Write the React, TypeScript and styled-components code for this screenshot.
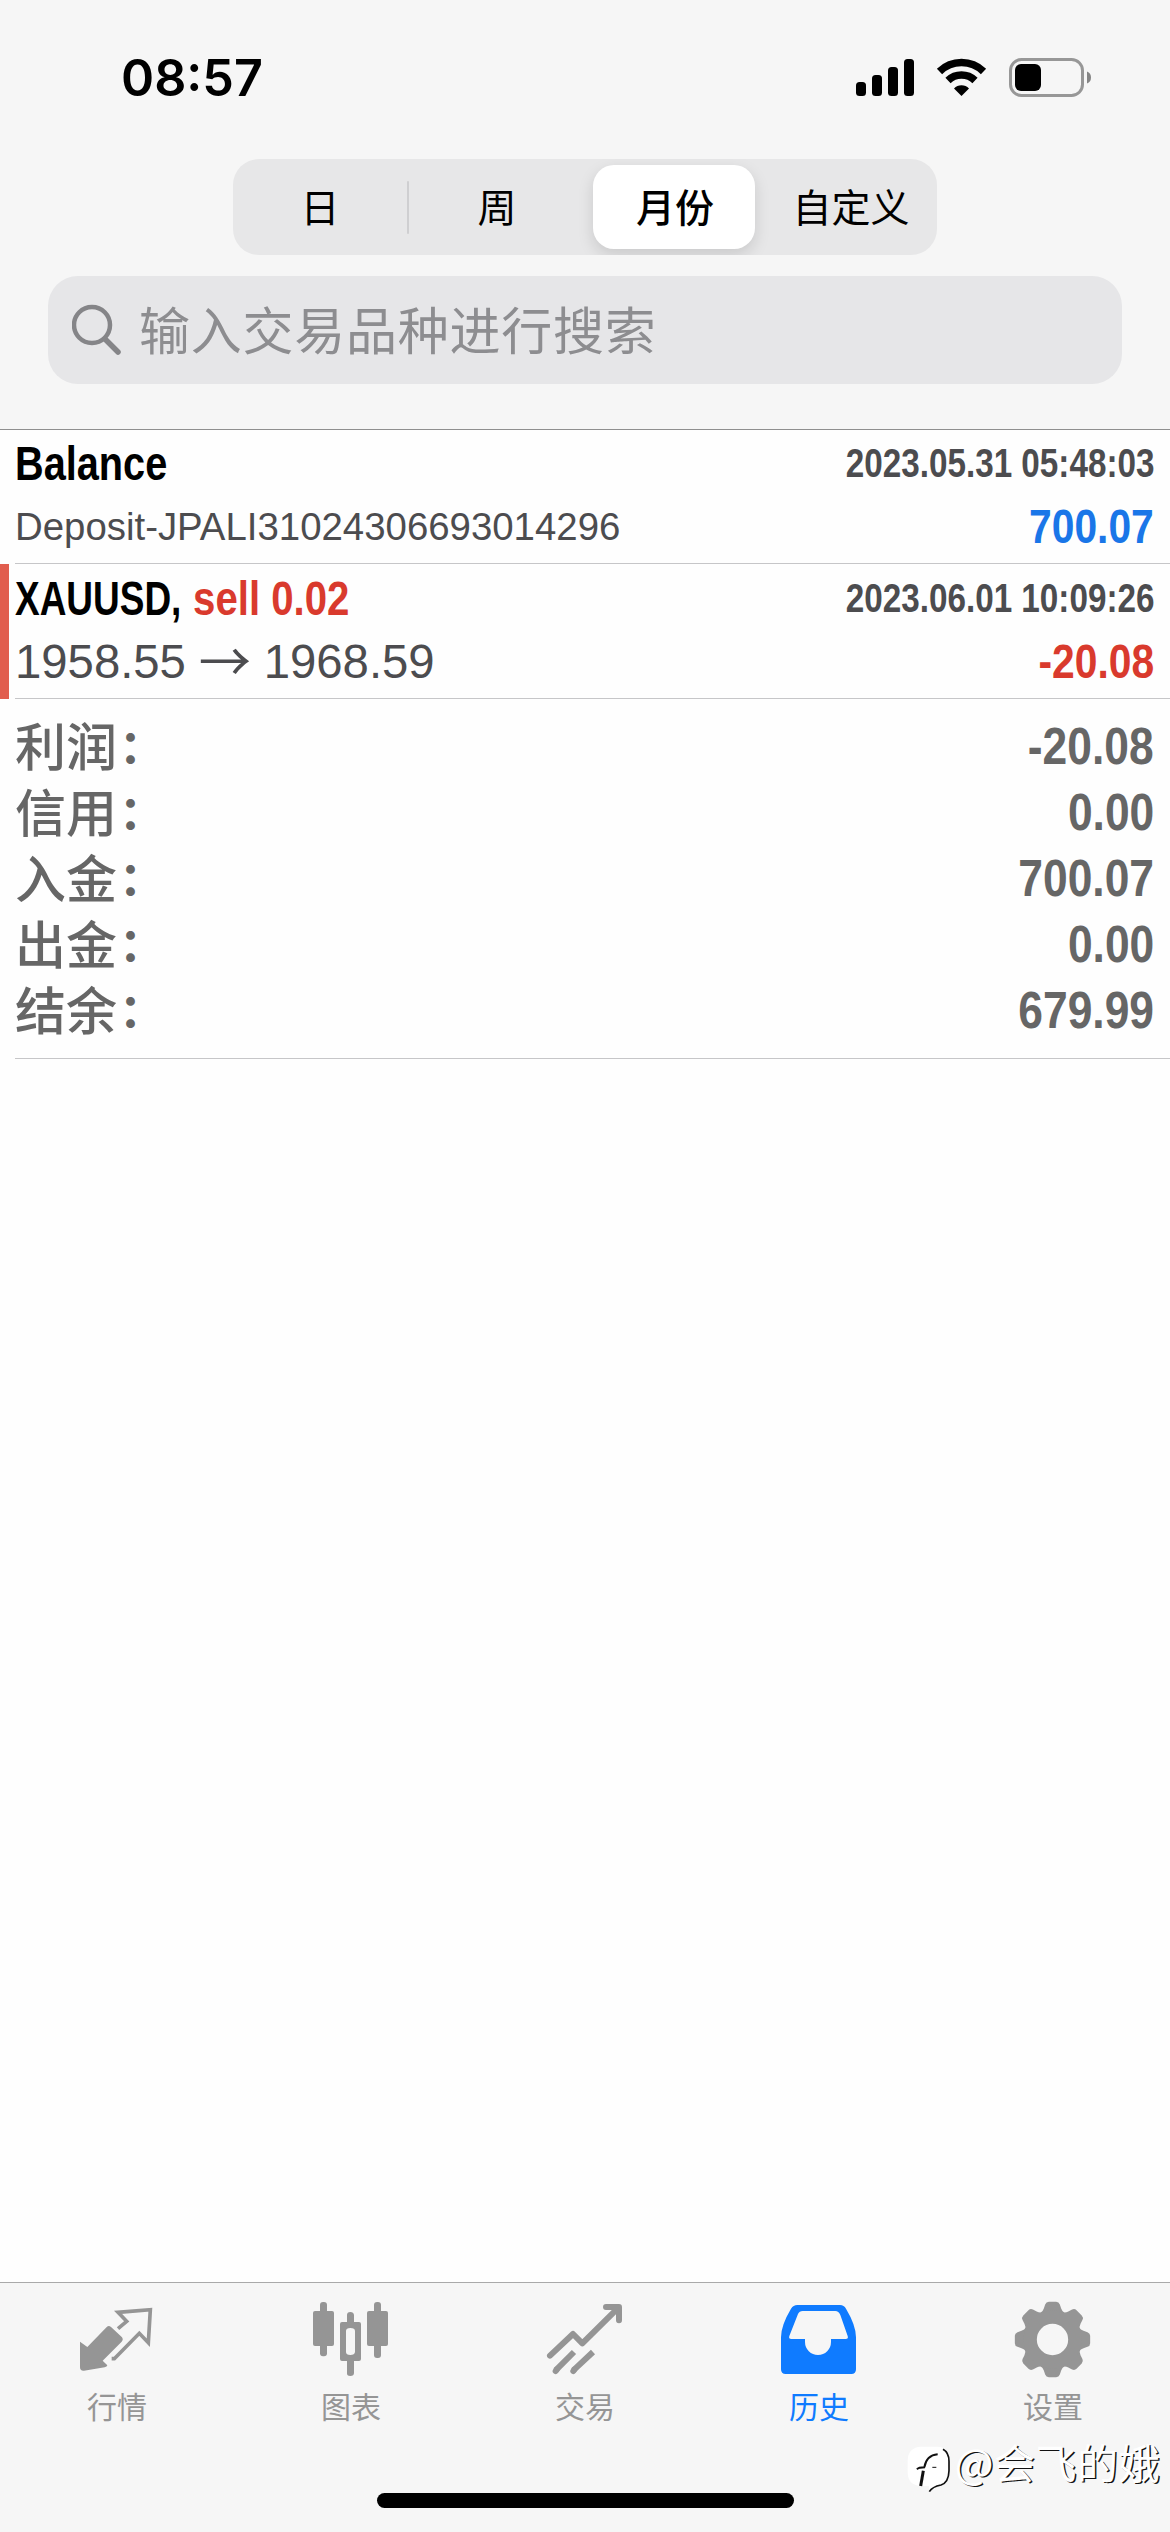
import React from "react";
import styled, { createGlobalStyle } from "styled-components";

const LATIN = `"Liberation Sans", Arial, "Noto Sans CJK SC", sans-serif`;
const CJK = `"Noto Sans CJK SC", "Liberation Sans", sans-serif`;

const GlobalStyle = createGlobalStyle`
  * { box-sizing: border-box; }
  html, body { margin: 0; padding: 0; background: #fff; }
`;

const Screen = styled.div`
  position: relative;
  width: 1170px;
  height: 2532px;
  display: flex;
  flex-direction: column;
  background: #fefefe;
  overflow: hidden;
  font-family: ${LATIN};
`;

const Header = styled.header`
  flex: none;
  height: 430px;
  background: #f6f6f6;
  border-bottom: 1px solid #8f8f8f;
  display: flex;
  flex-direction: column;
  align-items: center;
`;

const StatusBar = styled.div`
  width: 100%;
  height: 159px;
  padding: 0 78px 0 121px;
  display: flex;
  justify-content: space-between;
`;

const Clock = styled.div`
  margin-top: 47px;
  font: 600 51px/62px Inter, sans-serif;
  color: #000;
  transform-origin: left;
  transform: scaleX(0.985);
`;

const StatusIcons = styled.div`
  display: flex;
  padding-top: 56px;
`;

const Segmented = styled.div`
  width: 704px;
  height: 96px;
  border-radius: 26px;
  background: #e7e7e8;
  display: flex;
  align-items: center;
  overflow: hidden;
`;

const Segment = styled.div<{ $active?: boolean; $width: number; $inset?: number }>`
  flex: none;
  width: ${(p) => p.$width}px;
  height: 84px;
  padding-left: ${(p) => p.$inset ?? 0}px;
  border-radius: 21px;
  font: ${(p) => (p.$active ? 500 : 400)} 39px/80px ${CJK};
  text-align: center;
  color: #000;
  background: ${(p) => (p.$active ? "#fff" : "transparent")};
  box-shadow: ${(p) => (p.$active ? "0 6px 16px rgba(0,0,0,.13)" : "none")};
  margin-left: ${(p) => (p.$active ? 10 : 0)}px;
`;

const SegmentRule = styled.div`
  width: 2px;
  height: 53px;
  border-radius: 1px;
  background: #cfcfd1;
`;

const SearchField = styled.div`
  width: 1074px;
  height: 108px;
  margin-top: 21px;
  padding-left: 24px;
  border-radius: 30px;
  background: #e6e6e8;
  display: flex;
  align-items: center;
  gap: 15px;
`;

const Placeholder = styled.span`
  font: 400 51px/100px ${CJK};
  letter-spacing: 0.75px;
  color: #8d8d90;
  padding-bottom: 4px;
`;

const Entry = styled.article<{ $height: number; $marked?: boolean }>`
  flex: none;
  height: ${(p) => p.$height}px;
  display: grid;
  grid-template-columns: 9px 1fr;
  column-gap: 6px;

  &::before {
    content: "";
    background: ${(p) => (p.$marked ? "#e15d4e" : "transparent")};
  }
`;

const EntryBody = styled.div`
  display: flex;
  flex-direction: column;
  justify-content: flex-end;
  padding: 0 16px 4px 0;
  border-bottom: 1px solid #c6c6c8;
`;

const Line = styled.div`
  height: 64px;
  display: flex;
  justify-content: space-between;
  align-items: center;
  white-space: nowrap;
`;

const Label = styled.span<{
  $size: number;
  $color: string;
  $bold?: boolean;
  $narrow?: number;
  $end?: boolean;
}>`
  font-size: ${(p) => p.$size}px;
  line-height: 64px;
  font-weight: ${(p) => (p.$bold ? 700 : 400)};
  color: ${(p) => p.$color};
  transform-origin: ${(p) => (p.$end ? "right" : "left")};
  transform: scaleX(${(p) => p.$narrow ?? 1});
`;

const SymbolName = styled.span`
  display: inline-block;
  transform-origin: left;
  transform: scaleX(0.92);
  margin-right: -17px;
`;

const Side = styled.span`
  color: #d93a2d;
`;

const Arrow = styled.span`
  font-family: "Noto Sans CJK SC", sans-serif;
  font-size: 53px;
  line-height: 0;
  vertical-align: -4px;
  margin: 0 13px;
`;

const Summary = styled.section`
  flex: none;
  margin-left: 15px;
  height: 360px;
  padding: 15px 16px 0 0;
  border-bottom: 1px solid #c6c6c8;
`;

const SummaryLine = styled.div`
  height: 66px;
  display: flex;
  justify-content: space-between;
  align-items: center;
`;

const SummaryName = styled.span`
  font: 500 51px/60px ${CJK};
  color: #666;
  padding-bottom: 7px;
`;

const Colon = styled.span`
  margin-left: 2px;
  font-size: 46px;
  font-weight: 700;
  line-height: 0;
  vertical-align: 3px;
`;

const Spacer = styled.div`
  flex: 1;
`;

const TabBar = styled.nav`
  flex: none;
  height: 250px;
  padding-top: 15px;
  border-top: 1px solid #a9a9a9;
  background: #f6f6f6;
  display: flex;
  flex-direction: column;
  justify-content: space-between;
`;

const Tabs = styled.div`
  display: grid;
  grid-template-columns: repeat(5, 1fr);
`;

const Tab = styled.div<{ $active?: boolean }>`
  display: flex;
  flex-direction: column;
  align-items: center;
  color: ${(p) => (p.$active ? "#0f7bff" : "#959595")};
`;

const TabName = styled.span`
  font: 400 30px/40px ${CJK};
  margin-top: 7px;
`;

const HomeIndicator = styled.div`
  width: 417px;
  height: 15px;
  border-radius: 8px;
  background: #000;
  margin: 0 auto 24px;
`;

const Watermark = styled.div`
  position: absolute;
  right: 10px;
  bottom: 38px;
  display: flex;
  align-items: flex-end;
  gap: 4px;
  color: #fff;
`;

const WatermarkName = styled.span`
  font: 400 41px/52px ${CJK};
  letter-spacing: 0.5px;
  padding-bottom: 7px;
  text-shadow: 1.5px 1px 0 #111;
`;

const entries = [
  {
    height: 134,
    title: "Balance",
    side: "",
    time: "2023.05.31 05:48:03",
    amount: "700.07",
    color: "#1a76e8",
  },
  {
    height: 135,
    title: "XAUUSD,",
    side: "sell 0.02",
    time: "2023.06.01 10:09:26",
    amount: "-20.08",
    color: "#d93a2d",
  },
];

const totals = [
  ["利润", "-20.08"],
  ["信用", "0.00"],
  ["入金", "700.07"],
  ["出金", "0.00"],
  ["结余", "679.99"],
];

const QuotesIcon = () => (
  <svg width="80" height="80" viewBox="231 114 240 240">
    <path
      fill="currentColor"
      d="M240 245L262 261L321 200Q327 195 333 201L366 232Q371 239 365 245L308 302L322 316Q321 321 314 322L252 332Q240 333 240 322Z"
    />
    <path
      fill="none"
      stroke="currentColor"
      strokeWidth="11"
      d="M354 206L380 184L354 157L451 149L445 248L418 220L343 296L335 296"
    />
  </svg>
);

const ChartIcon = () => (
  <svg width="80" height="80" viewBox="933 114 240 240" fill="currentColor">
    <rect x="960" y="126" width="21" height="163" rx="9" />
    <rect x="939" y="153" width="63" height="105" rx="6" />
    <rect x="1122" y="126" width="21" height="168" rx="9" />
    <rect x="1101" y="153" width="63" height="105" rx="6" />
    <path
      fillRule="evenodd"
      d="M1041 186V165Q1041 156 1051 156T1062 165V186H1077Q1083 186 1083 192V297Q1083 303 1077 303H1062V339Q1062 348 1051 348T1041 339V303H1026Q1020 303 1020 297V192Q1020 186 1026 186ZM1051 204Q1038 204 1038 213V276Q1038 285 1051 285T1065 276V213Q1065 204 1051 204Z"
    />
  </svg>
);

const TradeIcon = () => (
  <svg width="80" height="80" viewBox="375 114 240 240" fill="none" stroke="currentColor" strokeWidth="18">
    <path strokeLinecap="round" strokeLinejoin="round" d="M390 287L459 222L487 250L590 148" />
    <path strokeLinecap="round" strokeLinejoin="round" d="M558 141H597V181" />
    <path d="M462 276L407 331M519 276L460 331" />
    <path strokeLinecap="round" d="M410 329L407 333M463 329L460 333" />
  </svg>
);

const HistoryIcon = () => (
  <svg width="80" height="80" viewBox="1077 114 240 240">
    <path
      fill="currentColor"
      fillRule="evenodd"
      d="M1132 135H1260Q1272 135 1278 146Q1308 196 1308 232V328Q1308 342 1294 342H1097Q1083 342 1083 328V232Q1083 196 1113 146Q1120 135 1132 135ZM1148 153Q1138 153 1134 162L1108 228Q1105 237 1114 237H1155V246A39 39 0 0 0 1233 246V237H1277Q1286 237 1283 228L1261 165Q1256 153 1246 153Z"
    />
  </svg>
);

const SettingsIcon = () => (
  <svg width="80" height="80" viewBox="459 114 240 240">
    <g fill="currentColor" transform="translate(577.5 238.5)">
      {[0, 45, 90, 135, 180, 225, 270, 315].map((angle) => (
        <path
          key={angle}
          transform={`rotate(${angle})`}
          d="M-36 -80Q-29 -84 -26 -93L-22 -105Q-19 -113 -11 -113H11Q19 -113 22 -105L26 -93Q29 -84 36 -80V-60H-36Z"
        />
      ))}
      <path fillRule="evenodd" d="M0 -87A87 87 0 1 0 0 87A87 87 0 1 0 0 -87ZM0 -47A47 47 0 1 1 0 47A47 47 0 1 1 0 -47Z" />
    </g>
  </svg>
);

const tabs = [
  { name: "行情", Icon: QuotesIcon },
  { name: "图表", Icon: ChartIcon },
  { name: "交易", Icon: TradeIcon },
  { name: "历史", Icon: HistoryIcon, active: true },
  { name: "设置", Icon: SettingsIcon },
];

const StatusGlyphs = () => (
  <svg width="240" height="44" viewBox="852 56 240 44">
    <rect x="856" y="82" width="10" height="14" rx="3.5" />
    <rect x="872" y="75" width="10" height="21" rx="3.5" />
    <rect x="888" y="67" width="10" height="29" rx="3.5" />
    <rect x="904" y="59" width="10" height="37" rx="3.5" />
    <g fill="none" stroke="#000" strokeWidth="7.5">
      <path d="M939.500 71.500A31.500 31.500 0 0 1 983.500 71.500" />
      <path d="M948 80.500A19.500 19.500 0 0 1 975 80.500" />
    </g>
    <path d="M961.500 96L954 88.500A10.500 10.500 0 0 1 969 88.500Z" />
    <rect x="1010.500" y="59.500" width="72" height="36" rx="11" fill="none" stroke="#979797" strokeWidth="3" />
    <rect x="1015" y="64" width="26" height="27" rx="6" />
    <path fill="#858585" d="M1087 71.500Q1091 73 1091 77.500T1087 83.500Z" />
  </svg>
);

const SearchIcon = () => (
  <svg width="52" height="52" viewBox="0 0 52 52" fill="none" stroke="#858588">
    <circle cx="20" cy="21" r="18" strokeWidth="4.500" />
    <path d="M33 35L46 48" strokeWidth="5.500" strokeLinecap="round" />
  </svg>
);

const Bubble = () => (
  <svg width="44" height="48" viewBox="20 34 132 144">
    <path
      fill="#fff"
      d="M62 36H112Q146 38 146 76V108Q146 146 108 152L86 168V154H62Q22 152 22 112V76Q24 38 62 36Z"
    />
    <g fill="none" stroke="#111">
      <path strokeWidth="5" d="M128 44Q146 54 146 80V108Q145 143 122 151Q96 156 87 171" />
      <path strokeWidth="6" d="M50 104Q54 98 74 98M72 98Q78 62 112 59" />
      <path strokeWidth="9" d="M69 108L61 154" />
      <path strokeWidth="3" d="M96 98H108" />
    </g>
  </svg>
);

export default function App() {
  return (
    <Screen>
      <GlobalStyle />
      <Header>
        <StatusBar>
          <Clock>08:57</Clock>
          <StatusIcons>
            <StatusGlyphs />
          </StatusIcons>
        </StatusBar>
        <Segmented>
          <Segment $width={174}>日</Segment>
          <SegmentRule />
          <Segment $width={174} $inset={2}>
            周
          </Segment>
          <Segment $width={162} $inset={2} $active>
            月份
          </Segment>
          <Segment $width={182} $inset={10}>
            自定义
          </Segment>
        </Segmented>
        <SearchField>
          <SearchIcon />
          <Placeholder>输入交易品种进行搜索</Placeholder>
        </SearchField>
      </Header>

      {entries.map((e) => (
        <Entry key={e.title} $height={e.height} $marked={!!e.side}>
          <EntryBody>
            <Line>
              {e.side ? (
                <Label $size={49} $color="#000" $bold $narrow={0.82}>
                  <SymbolName>{e.title}</SymbolName> <Side>{e.side}</Side>
                </Label>
              ) : (
                <Label $size={49} $color="#000" $bold $narrow={0.81}>
                  {e.title}
                </Label>
              )}
              <Label $size={40} $color="#4c4c4f" $bold $narrow={0.831} $end>
                {e.time}
              </Label>
            </Line>
            <Line>
              {e.side ? (
                <Label $size={48} $color="#4c4c4f" $narrow={0.985}>
                  1958.55<Arrow>→</Arrow>1968.59
                </Label>
              ) : (
                <Label $size={38} $color="#4c4c4f" $narrow={1.01}>
                  Deposit-JPALI31024306693014296
                </Label>
              )}
              <Label $size={48} $color={e.color} $bold $narrow={0.85} $end>
                {e.amount}
              </Label>
            </Line>
          </EntryBody>
        </Entry>
      ))}

      <Summary>
        {totals.map(([name, value]) => (
          <SummaryLine key={name}>
            <SummaryName>
              {name}
              <Colon>：</Colon>
            </SummaryName>
            <Label $size={51} $color="#666" $bold $narrow={0.87} $end>
              {value}
            </Label>
          </SummaryLine>
        ))}
      </Summary>

      <Spacer />

      <TabBar>
        <Tabs>
          {tabs.map(({ name, Icon, active }) => (
            <Tab key={name} $active={active}>
              <Icon />
              <TabName>{name}</TabName>
            </Tab>
          ))}
        </Tabs>
        <HomeIndicator />
      </TabBar>

      <Watermark>
        <Bubble />
        <WatermarkName>@会飞的娥</WatermarkName>
      </Watermark>
    </Screen>
  );
}
